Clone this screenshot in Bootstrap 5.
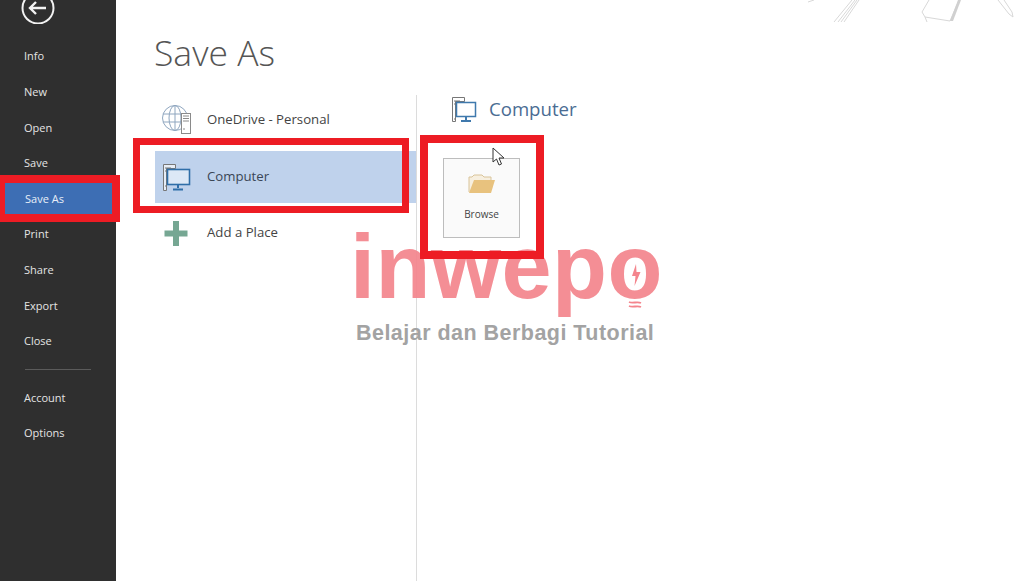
<!DOCTYPE html>
<html lang="en">
<head>
<meta charset="utf-8">
<title>Save As</title>
<link href="https://cdn.jsdelivr.net/npm/bootstrap@5.3.0/dist/css/bootstrap.min.css" rel="stylesheet">
<style>
html,body{height:100%;margin:0;overflow:hidden;background:#fff}
body{font-family:"Open Sans","Noto Sans",sans-serif;color:#444}
.stage{width:1014px;height:581px;position:relative;overflow:hidden;background:#fff}
.side{width:116px;flex:none;background:#2f2f2f;height:581px}
.back{display:block;height:24px;margin-bottom:14.4px}
.side-link{display:block;height:35.6px;line-height:35.6px;padding-left:24px;color:#e4e4e4;font-size:11px;text-decoration:none}
.side-link.now{background:#3d6eb4;color:#e8eef8;margin:2px 4px 2px 5px;height:31.6px;line-height:31.6px;padding-left:20px}
.side-rule{border-top:1px solid #5b5b5b;width:66px;margin:10px 0 10px 25px;height:0}
.main{flex:1;min-width:0}
.title{font-size:35.5px;font-weight:300;color:#555;margin:0;padding:29px 0 0 38px;height:95px;line-height:46px}
.cols{height:486px}
.places{width:262px;margin-left:39px;flex:none;border-right:1px solid #dcdcdc}
.place{height:50px;padding-left:7px;gap:15px;font-size:13.2px;color:#444;margin-bottom:6px}
.place.picked{background:#bfd2ec;height:52px;color:#3a4656;margin-bottom:5px;gap:16px}
.place.extra{gap:16px}
.place svg{flex:none}
.detail{padding-left:34px}
.detail-head{height:28px;gap:12px;font-size:18.6px;color:#4a6c93}
.tile{width:77px;height:80px;margin:35px 0 0 -8px;border:1px solid #bdbdbd;background:#fafafa;font-size:10px;color:#444;padding-top:13px;gap:13px;line-height:15px}
.frame{position:absolute;border-style:solid;border-color:#ed1c24;background:transparent;z-index:3}
.f-nav{left:0;top:175px;width:120px;height:47px;border-width:8px 8px 8px 5px}
.f-place{left:133px;top:138px;width:276px;height:75px;border-width:7px}
.f-tile{left:420px;top:135px;width:124px;height:124px;border-width:8px}
.wm{position:absolute;left:350px;top:232px;width:320px;z-index:2;font-family:"Liberation Sans",Arial,sans-serif;font-weight:700}
.wm-name{font-size:90px;line-height:70px;color:#f4858d;opacity:.92;letter-spacing:.5px;white-space:nowrap}
.wm-line{font-size:21.5px;line-height:26px;color:#a3a3a3;padding-left:6px;letter-spacing:.47px;white-space:nowrap;margin-top:18px}
.bulb{position:absolute;left:616px;top:248px;z-index:2}
.pointer{position:absolute;left:492px;top:147px;z-index:4}
.sketch{position:absolute;left:800px;top:0;z-index:1}
</style>
</head>
<body>
<div class="stage d-flex">
  <nav class="side d-flex flex-column">
    <svg class="back" width="116" height="24" viewBox="0 0 116 24" aria-hidden="true">
      <circle cx="38" cy="8" r="15.5" fill="none" stroke="#f2f2f2" stroke-width="2"/>
      <path d="M46 8H30M36 2l-6 6 6 6" fill="none" stroke="#f2f2f2" stroke-width="2.4"/>
    </svg>
    <a class="side-link" href="#">Info</a>
    <a class="side-link" href="#">New</a>
    <a class="side-link" href="#">Open</a>
    <a class="side-link" href="#">Save</a>
    <a class="side-link now" href="#">Save As</a>
    <a class="side-link" href="#">Print</a>
    <a class="side-link" href="#">Share</a>
    <a class="side-link" href="#">Export</a>
    <a class="side-link" href="#">Close</a>
    <div class="side-rule"></div>
    <a class="side-link" href="#">Account</a>
    <a class="side-link" href="#">Options</a>
  </nav>
  <main class="main">
    <h1 class="title">Save As</h1>
    <div class="cols d-flex">
      <div class="places">
        <div class="place d-flex align-items-center">
          <svg width="30" height="30" viewBox="0 0 30 30" aria-hidden="true">
            <g fill="none" stroke="#8fa6bf" stroke-width="1"><circle cx="13" cy="13" r="12.5"/><ellipse cx="13" cy="13" rx="6" ry="12.5"/><path d="M1 9h24M1 17h24M13 .5v25"/></g>
            <rect x="19.5" y="8.5" width="9" height="20" fill="#fff" stroke="#8a8a8a"/>
            <path d="M21 11h6M21 13.5h6M21 16h6M21 24h2" stroke="#8a8a8a"/>
          </svg>
          <span>OneDrive - Personal</span>
        </div>
        <div class="place picked d-flex align-items-center">
          <svg width="29" height="29" viewBox="0 0 29 29" aria-hidden="true">
            <path d="M1.500 1.500h12v4h-9v22h-3z" fill="#e6edf6" stroke="#777"/>
            <path d="M3 5h6M3 8h1M3 23h1" stroke="#777"/>
            <rect x="5.500" y="6.500" width="22" height="15" fill="#dce8f6" stroke="#2f6ea8" stroke-width="1.600"/>
            <path d="M16 22v3M11 26.500h10" stroke="#2f6ea8" stroke-width="2"/>
          </svg>
          <span>Computer</span>
        </div>
        <div class="place extra d-flex align-items-center">
          <svg width="29" height="25" viewBox="0 0 29 25" aria-hidden="true">
            <path d="M10.500 0h6v9.500H25v6h-8.500V25h-6v-9.500H2v-6h8.500z" fill="#76a793" transform="translate(.5 0)"/>
          </svg>
          <span>Add a Place</span>
        </div>
      </div>
      <div class="detail">
        <div class="detail-head d-flex align-items-center">
          <svg width="26" height="27" viewBox="0 0 26 27" aria-hidden="true">
            <path d="M1.500 1.500h12v4h-9v20h-3z" fill="#fff" stroke="#777"/>
            <path d="M3 5h6M3 8h1M3 23h1" stroke="#777"/>
            <rect x="5.500" y="6.500" width="19" height="14" fill="#fff" stroke="#3f79ad" stroke-width="1.500"/>
            <path d="M15 21v3M10 25h10" stroke="#3f79ad" stroke-width="2"/>
          </svg>
          <span>Computer</span>
        </div>
        <div class="tile d-flex flex-column align-items-center">
          <svg width="28" height="22" viewBox="0 0 28 22" aria-hidden="true">
            <path d="M1 20V5h3l2-2h8l2 2h7v4" fill="#f7efdf" stroke="#d9c49a"/>
            <path d="M1 21l5-13h21l-4 13z" fill="#e8c27e"/>
          </svg>
          <span>Browse</span>
        </div>
      </div>
    </div>
  </main>

  <svg class="sketch" width="214" height="24" viewBox="0 0 214 24" aria-hidden="true">
    <g fill="none" stroke="#d8d8d8" stroke-width="1">
      <path d="M34 22L52 0M38 22L55 0M41 22L57 0M44 22L59 0"/>
      <path d="M8 2l6-2"/>
      <path d="M122 12l7-12M122 12l3 5 25 4 9-21M125 17l2 5"/>
      <path d="M198 0l11 14 4 3-1-5-8-12"/>
    </g>
    <path d="M150 21l8-21h3l-8 21z" fill="#d0d0d0"/>
  </svg>

  <div class="wm">
    <div class="wm-name">inwepo</div>
    <div class="wm-line">Belajar dan Berbagi Tutorial</div>
  </div>
  <svg class="bulb" width="46" height="62" viewBox="0 0 46 62" aria-hidden="true">
    <path d="M20 16l-4 12h3.500l-1 10 6-14h-4z" fill="#f4858d"/>
    <path d="M13 54c4 2 8-1 12 1M13 58c4 2 8-1 12 1" fill="none" stroke="#f4858d" stroke-width="1.800"/>
  </svg>

  <div class="frame f-nav"></div>
  <div class="frame f-place"></div>
  <div class="frame f-tile"></div>

  <svg class="pointer" width="14" height="20" viewBox="0 0 14 20" aria-hidden="true">
    <path d="M1 1v14l3.500-3 2.500 6 2.500-1-2.500-6H12z" fill="#fff" stroke="#333"/>
  </svg>
</div>
<script src="https://cdn.jsdelivr.net/npm/bootstrap@5.3.0/dist/js/bootstrap.bundle.min.js"></script>
</body>
</html>
